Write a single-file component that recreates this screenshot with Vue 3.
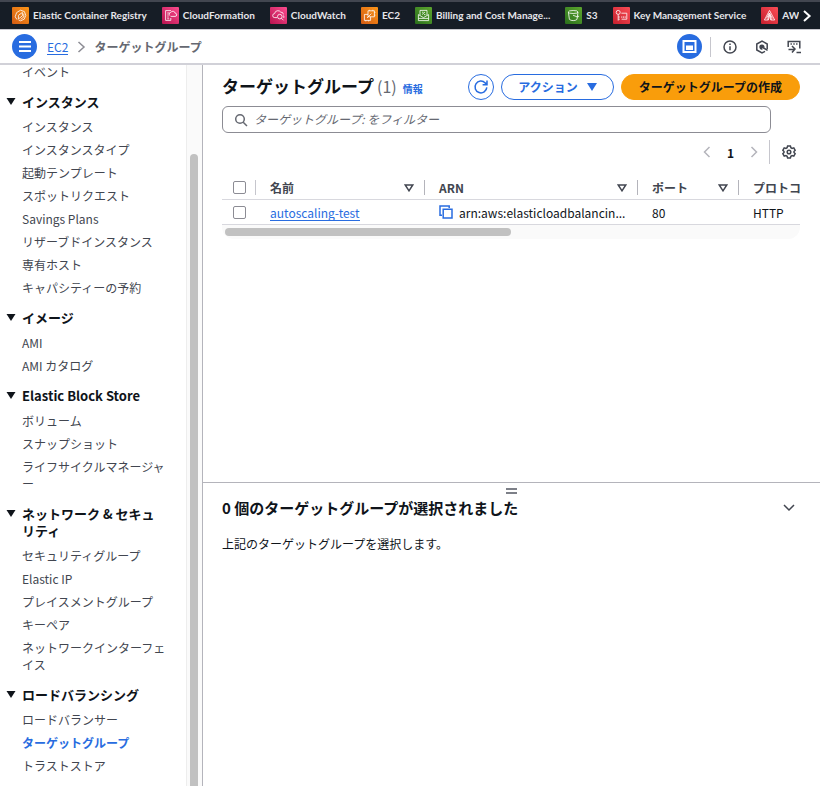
<script setup>
import { ref } from 'vue'

const services = [
  { name: 'Elastic Container Registry', icon: 'ecr', tone: 'orange' },
  { name: 'CloudFormation', icon: 'cfn', tone: 'pink' },
  { name: 'CloudWatch', icon: 'cw', tone: 'pink' },
  { name: 'EC2', icon: 'ec2', tone: 'orange' },
  { name: 'Billing and Cost Manage...', icon: 'bill', tone: 'green' },
  { name: 'S3', icon: 's3', tone: 'green' },
  { name: 'Key Management Service', icon: 'kms', tone: 'red' },
  { name: 'AW', icon: 'iam', tone: 'red' }
]

const sections = [
  {
    title: 'インスタンス',
    items: ['インスタンス', 'インスタンスタイプ', '起動テンプレート', 'スポットリクエスト', 'Savings Plans', 'リザーブドインスタンス', '専有ホスト', 'キャパシティーの予約']
  },
  { title: 'イメージ', items: ['AMI', 'AMI カタログ'] },
  { title: 'Elastic Block Store', items: ['ボリューム', 'スナップショット', 'ライフサイクルマネージャー'] },
  {
    title: 'ネットワーク & セキュリティ',
    items: ['セキュリティグループ', 'Elastic IP', 'プレイスメントグループ', 'キーペア', 'ネットワークインターフェイス']
  },
  { title: 'ロードバランシング', items: ['ロードバランサー', 'ターゲットグループ', 'トラストストア'] }
]

const current = 'ターゲットグループ'
const filter = ref('')
</script>

<template>
  <div class="console" lang="ja">
    <nav class="favorites">
      <ul class="fav-list">
        <li v-for="s in services" :key="s.icon">
          <a href="#" class="fav">
            <svg class="fav-icon" :class="s.tone" viewBox="0 0 17 17" aria-hidden="true">
              <g v-if="s.icon === 'ecr'">
                <path d="M5 12.6 3.2 9.8 4.6 5.6 8.6 3.2l3.8 1.4 1.4 3.8-1.6 3.8-3.6 1.6-2-.8" />
                <path d="M6.4 12V8.4L10.4 5.4v3.4zM8.6 12.4 11.8 10V6.6" />
              </g>
              <g v-else-if="s.icon === 'cfn'">
                <path d="M9 3.6H3.6v9.8h5.2V11M5.2 6h2.6M5.2 8h1.6M5.2 10h1.6M5.2 11.8h2" />
                <path d="M8.6 9.4h4.4a1.6 1.6 0 0 0 .2-3.2 2.4 2.4 0 0 0-4.4-.8 1.9 1.9 0 0 0-1 3.2" />
              </g>
              <g v-else-if="s.icon === 'cw'">
                <path d="M7 10.6H4.8a2 2 0 0 1-.2-4 3.4 3.4 0 0 1 6.2-1.4 2.4 2.4 0 0 1 2.6 2.2" />
                <circle cx="9.8" cy="9.6" r="2.3" />
                <path d="m11.5 11.3 2 2M13 8.4a1.6 1.6 0 0 1 .4 2.6" />
              </g>
              <g v-else-if="s.icon === 'ec2'">
                <path d="M7 3.8h6.4v6H7zM9.6 9.8v3.6H3.4V7.4H7M8.4 3.8V2.8M11.8 3.8V2.8M13.4 5.4h1M13.4 8.2h1M4.8 13.4v1M7.6 13.4v1M6 11l4.4-4.4" />
              </g>
              <g v-else-if="s.icon === 'bill'">
                <path d="M5 8.2V3.4h7v4.8M3.4 7.6 8.5 10.6l5.1-3M3.4 13.6h10.2M3.4 11.4h10.2M3.4 7.6v6M13.6 7.6v6M7 7.6 10 5M7 5.2h1.4M9 7.6h1.4" />
              </g>
              <g v-else-if="s.icon === 's3'">
                <ellipse cx="8.2" cy="5" rx="4.8" ry="1.5" />
                <path d="m3.4 5 1 7.4c1.6 1.6 6 1.6 7.6 0l1-7.4M8 8.2l4 1.6c2 .4 2-.6.8-1.4" />
              </g>
              <g v-else-if="s.icon === 'kms'">
                <circle cx="5.2" cy="5.4" r="2" />
                <path d="M5.2 7.4v6.2M5.2 10h1.6M5.2 12.2h1.6M8.4 6.2h5.4v6H8.6M8.8 9.4v1.4M10.6 9.4v1.4M12.2 9.4v1.4" />
              </g>
              <g v-else>
                <path d="M8.5 3.4 3.4 13h4L8.5 8l1.2 5h4zM5.4 11.4l3-5.4 3 5.4M6.6 12.8 8.5 6l2 6.8" />
              </g>
            </svg>
            <span>{{ s.name }}</span>
          </a>
        </li>
      </ul>
      <button class="fav-next" type="button" aria-label="›">
        <svg width="10" height="14" viewBox="0 0 10 14"><path d="m2 2 5.6 5L2 12" /></svg>
      </button>
    </nav>

    <header class="crumb-bar">
      <button class="round" type="button" aria-label="≡">
        <svg width="25" height="25" viewBox="0 0 25 25"><path d="M7 8h12M7 12.5h12M7 17h12" /></svg>
      </button>
      <a href="#" class="link crumb-link">EC2</a>
      <svg class="crumb-sep" width="9" height="12" viewBox="0 0 9 12"><path d="m1.5 1 5.5 5-5.5 5" /></svg>
      <span class="crumb-here">ターゲットグループ</span>
      <div class="tools">
        <button class="round" type="button" aria-label="□">
          <svg width="25" height="25" viewBox="0 0 25 25">
            <path d="M6.5 7h12v11h-12z" />
            <path class="solid" d="M9 11.500h7V16H9z" />
          </svg>
        </button>
        <span class="tool-rule"></span>
        <button class="tool" type="button" aria-label="i">
          <svg width="16" height="16" viewBox="0 0 16 16"><circle cx="8" cy="8" r="6" /><path d="M8 7.2v4M8 4.6v1.4" /></svg>
        </button>
        <button class="tool" type="button" aria-label="⬡">
          <svg width="16" height="16" viewBox="0 0 16 16"><path d="M11 12.4 8 14l-5.200-3V5L8 2l5.200 3v5" /><path class="solid" d="M8 5.400a2.600 2.600 0 1 0 .6 5.100L8 8l2.400.8A2.600 2.600 0 0 0 8 5.400z" /><path d="m8 8 5.600 3.400" /></svg>
        </button>
        <button class="tool" type="button" aria-label=">_">
          <svg width="16" height="16" viewBox="0 0 16 16"><path d="M2.2 8V2.5h11.6V9.5M4.5 5h1.4M7.3 5h1.4M10.1 5h1.4M2.5 10.5h6M6 7l3 3-3 3.5M10.5 13.5H15" /></svg>
        </button>
      </div>
    </header>

    <div class="body">
      <aside class="sidebar">
        <nav class="side-nav">
          <ul class="side-list lead"><li><a href="#">イベント</a></li></ul>
          <section v-for="sec in sections" :key="sec.title">
            <h2>
              <svg width="10" height="7" viewBox="0 0 10 7"><path d="M.5 0h9L5 7z" /></svg>
              <span>{{ sec.title }}</span>
            </h2>
            <ul class="side-list">
              <li v-for="item in sec.items" :key="item">
                <a href="#" :class="{ active: item === current }">{{ item }}</a>
              </li>
            </ul>
          </section>
        </nav>
        <div class="side-track"><div class="side-thumb"></div></div>
      </aside>

      <main>
        <section class="groups">
          <div class="head">
            <h1>ターゲットグループ</h1>
            <span class="count">(1)</span>
            <a href="#" class="info">情報</a>
            <div class="actions">
              <button class="btn icon" type="button" aria-label="↻">
                <svg width="16" height="16" viewBox="0 0 16 16"><path d="M13.8 8.4A5.9 5.9 0 1 1 12.2 3.9L14 5.6M14 1.5v4.3H9.6" /></svg>
              </button>
              <button class="btn" type="button">
                アクション
                <svg width="10" height="8" viewBox="0 0 10 8"><path class="fill" d="M0 0h10L5 8z" /></svg>
              </button>
              <button class="btn primary" type="button">ターゲットグループの作成</button>
            </div>
          </div>

          <label class="filter">
            <svg width="14" height="14" viewBox="0 0 14 14"><circle cx="6" cy="6" r="4.3" /><path d="m9.2 9.2 3.8 3.8" /></svg>
            <input v-model="filter" type="text" placeholder="ターゲットグループ: をフィルター" />
          </label>

          <div class="pager">
            <button type="button" aria-label="‹"><svg width="8" height="12" viewBox="0 0 8 12"><path d="M6.5 1 1.5 6l5 5" /></svg></button>
            <span class="page">1</span>
            <button type="button" aria-label="›"><svg width="8" height="12" viewBox="0 0 8 12"><path d="m1.5 1 5 5-5 5" /></svg></button>
            <span class="pager-rule"></span>
            <button class="gear" type="button" aria-label="⚙">
              <svg width="14" height="14" viewBox="0 0 14 14">
                <path d="M5.6 1h2.8l.5 1.7 1.2.7 1.7-.5 1.4 2.4L12 6.5v1l1.2 1.2-1.4 2.4-1.7-.5-1.2.7L8.4 13H5.6l-.5-1.7-1.2-.7-1.7.5L.8 8.7 2 7.5v-1L.8 5.3l1.4-2.4 1.7.5 1.2-.7z" />
                <circle cx="7" cy="7" r="1.8" />
              </svg>
            </button>
          </div>

          <div class="table-wrap">
            <table>
              <colgroup><col class="c-check" /><col class="c-name" /><col class="c-arn" /><col class="c-port" /><col class="c-proto" /></colgroup>
              <thead>
                <tr>
                  <th class="check"><input type="checkbox" aria-label="□" /></th>
                  <th v-for="h in ['名前', 'ARN', 'ポート', 'プロトコル']" :key="h">
                    <div class="th">
                      <span>{{ h }}</span>
                      <svg width="10" height="8" viewBox="0 0 10 8"><path d="M1.2 1h7.6L5 6.8z" /></svg>
                    </div>
                  </th>
                </tr>
              </thead>
              <tbody>
                <tr>
                  <td class="check"><input type="checkbox" aria-label="autoscaling-test" /></td>
                  <td><a href="#" class="link">autoscaling-test</a></td>
                  <td>
                    <div class="arn">
                      <button type="button" aria-label="⧉"><svg width="14" height="14" viewBox="0 0 14 14"><path d="M3 10.2H1V1h9.2v2M4.2 4.2H13V13H4.2z" /></svg></button>
                      <span>arn:aws:elasticloadbalancin...</span>
                    </div>
                  </td>
                  <td>80</td>
                  <td>HTTP</td>
                </tr>
              </tbody>
            </table>
            <div class="h-track"><div class="h-thumb"></div></div>
          </div>
        </section>

        <section class="split">
          <div class="grip"><span></span><span></span></div>
          <div class="split-head">
            <h2>0 個のターゲットグループが選択されました</h2>
            <button type="button" aria-label="⌄"><svg width="12" height="8" viewBox="0 0 12 8"><path d="m1 1 5 5 5-5" /></svg></button>
          </div>
          <p>上記のターゲットグループを選択します。</p>
        </section>
      </main>
    </div>
  </div>
</template>

<style>
body {
  background: #fff;
}
</style>

<style scoped>
.console {
  display: flex;
  flex-direction: column;
  height: 100vh;
  overflow: hidden;
  font-family: "Noto Sans CJK JP", "Noto Sans", sans-serif;
  font-size: 12px;
  line-height: 17px;
  color: #0f141a;
}
.console * {
  box-sizing: border-box;
}
ul, h1, h2, p {
  margin: 0;
  padding: 0;
  list-style: none;
}
a {
  color: inherit;
  text-decoration: none;
}
button {
  display: flex;
  align-items: center;
  justify-content: center;
  padding: 0;
  border: 0;
  background: none;
  font: inherit;
  color: inherit;
}
svg {
  display: block;
  flex: none;
  fill: none;
  stroke: currentColor;
  stroke-width: 1.5;
}

.favorites {
  display: flex;
  flex: none;
  align-items: center;
  height: 29px;
  padding: 0 8px 0 12px;
  border-top: 2px solid #424650;
  background: #161d26;
  color: #e6e6ea;
}
.fav-list {
  display: flex;
  flex: 1;
  gap: 15px;
  min-width: 0;
  overflow: hidden;
}
.fav {
  display: flex;
  align-items: center;
  gap: 4px;
  font-family: Lato, "Noto Sans CJK JP", sans-serif;
  font-size: 10px;
  font-weight: 700;
  white-space: nowrap;
}
.fav-icon {
  width: 17px;
  height: 17px;
  border-radius: 1px;
  stroke: #fff;
  stroke-width: 0.8;
}
.orange { background: linear-gradient(45deg, #d45b13, #fb9518); }
.pink { background: linear-gradient(45deg, #b8134f, #fb4b8e); }
.green { background: linear-gradient(45deg, #2a6f1c, #5ca62e); }
.red { background: linear-gradient(45deg, #c5202e, #fb4c55); }
.fav-next {
  flex: none;
  margin-left: 3px;
  color: #fff;
}
.fav-next svg {
  stroke-width: 2;
}

.crumb-bar {
  display: flex;
  flex: none;
  align-items: center;
  height: 36px;
  padding: 0 18px 0 12px;
  border-top: 1px solid #c6c6cd;
  border-bottom: 2px solid #d1d1d8;
}
.round {
  flex: none;
  border-radius: 50%;
  background: #286ce0;
  color: #fff;
}
.round svg {
  stroke-width: 2;
}
.solid {
  fill: currentColor;
  stroke: none;
}
.link {
  border-bottom: 1px solid #286ce0;
  color: #286ce0;
}
.crumb-link {
  margin-left: 10px;
  line-height: 15px;
}
.crumb-sep {
  margin: 0 8px 0 9px;
  color: #8c8c94;
}
.crumb-here {
  font-weight: 700;
  color: #656871;
}
.tools {
  display: flex;
  align-items: center;
  margin-left: auto;
  color: #424650;
}
.tool-rule {
  width: 1px;
  height: 20px;
  margin: 0 11px 0 8px;
  background: #c6c6cd;
}
.tool + .tool {
  margin-left: 16px;
}

.body {
  display: flex;
  flex: 1;
  min-height: 0;
}
.sidebar {
  display: flex;
  flex: none;
  width: 203px;
  overflow: hidden;
  border-right: 1px solid #b4b4bb;
}
.side-nav {
  flex: 1;
  padding: 0 18px 0 6px;
}
.side-list {
  display: flex;
  flex-direction: column;
  gap: 6px;
  margin: 8px 0 13px;
  padding-left: 16px;
  color: #424650;
  word-break: break-all;
  line-break: anywhere;
}
.side-list li {
  min-height: 17px;
}
.side-list a {
  display: block;
}
.side-list.lead {
  margin-top: -2px;
}
.active {
  font-weight: 700;
  color: #286ce0;
}
.side-nav h2 {
  display: flex;
  gap: 6px;
  padding-right: 4px;
  font-size: 13px;
  line-height: 17px;
}
.side-nav h2 svg {
  margin-top: 5px;
  fill: currentColor;
  stroke: none;
}
.side-track {
  flex: none;
  width: 16px;
  padding: 89px 4px 0 3px;
  border-left: 1px solid #ededed;
  background: #fafafa;
}
.side-thumb {
  height: 100%;
  border-radius: 4px 4px 0 0;
  background: #c1c1c1;
}

main {
  display: flex;
  flex: 1;
  flex-direction: column;
  min-width: 0;
}
.groups {
  flex: 1;
  min-height: 0;
  padding: 9px 20px 0 19px;
}
.head {
  display: flex;
  align-items: center;
  height: 26px;
}
h1 {
  font-size: 17px;
  line-height: 24px;
  white-space: nowrap;
}
h1, .count {
  padding-bottom: 2px;
}
.count {
  margin-left: 3px;
  font-size: 16px;
  line-height: 24px;
  color: #656871;
}
.info {
  margin: 3px 0 0 6px;
  font-size: 10px;
  font-weight: 700;
  color: #286ce0;
}
.actions {
  display: flex;
  gap: 7px;
  margin-left: auto;
}
.btn {
  gap: 9px;
  height: 26px;
  padding: 0 16px 1px;
  border: 1px solid #286ce0;
  border-radius: 13px;
  font-weight: 700;
  color: #286ce0;
  white-space: nowrap;
}
.btn.icon {
  width: 26px;
  padding: 0;
}
.btn.primary {
  padding: 0 17px 1px;
  border-color: #f99d0b;
  background: #f99d0b;
  color: #0f141a;
}
.fill {
  fill: currentColor;
  stroke: none;
}
.filter {
  display: flex;
  align-items: center;
  gap: 6px;
  height: 27px;
  margin: 6px 29px 0 0;
  padding: 0 11px;
  border: 1px solid #8c8c94;
  border-radius: 6px;
  color: #656871;
}
.filter input {
  flex: 1;
  min-width: 0;
  padding: 0 0 3px;
  border: 0;
  outline: 0;
  background: none;
  font: inherit;
  color: #0f141a;
}
.filter input::placeholder {
  font-style: italic;
  color: #656871;
  opacity: 1;
}
.pager {
  display: flex;
  align-items: center;
  justify-content: flex-end;
  height: 24px;
  margin-top: 7px;
  padding-right: 4px;
  color: #b4b4bb;
}
.page {
  width: 39px;
  text-align: center;
  font-weight: 700;
  color: #0f141a;
}
.pager-rule {
  width: 1px;
  height: 24px;
  margin: 0 12px 0 11px;
  background: #c6c6cd;
}
.gear {
  color: #424650;
}

.table-wrap {
  margin-top: 12px;
  overflow: hidden;
  border-radius: 0 0 12px 12px;
}
table {
  width: max(100%, 637px);
  table-layout: fixed;
  border-collapse: separate;
  border-spacing: 0;
}
.c-check { width: 34px; }
.c-name { width: 169px; }
.c-arn { width: 213px; }
.c-port { width: 101px; }
th, td {
  height: 24px;
  padding: 0 0 0 14px;
  border-bottom: 1px solid #d8d8de;
  text-align: left;
  white-space: nowrap;
}
td {
  height: 25px;
}
th {
  color: #424650;
}
.th {
  display: flex;
  align-items: center;
  justify-content: space-between;
  height: 15px;
  padding-right: 10px;
  border-right: 1px solid #b4b4bb;
}
.th svg {
  color: #424650;
}
.check {
  padding: 0 0 0 11px;
}
th.check {
  background: linear-gradient(#c6c6cd, #c6c6cd) right center / 1px 15px no-repeat;
}
.check input {
  display: block;
  width: 13px;
  height: 13px;
  margin: 0;
  appearance: none;
  border: 1px solid #8c8c94;
  border-radius: 2px;
  background: #fff;
}
td .link {
  display: inline-block;
  line-height: 15px;
}
.arn {
  display: flex;
  align-items: center;
  gap: 6px;
}
.arn button {
  color: #286ce0;
}
.h-track {
  height: 14px;
  padding: 3px;
  background: #fafafa;
}
.h-thumb {
  width: 50%;
  height: 8px;
  border-radius: 4px;
  background: #c1c1c1;
}

.split {
  flex: 0 0 304px;
  padding: 5px 20px 0 19px;
  border-top: 1px solid #b4b4bb;
}
.grip {
  display: flex;
  flex-direction: column;
  align-items: center;
  gap: 2px;
}
.grip span {
  width: 11px;
  height: 2px;
  background: #7d8088;
}
.split-head {
  display: flex;
  align-items: center;
  justify-content: space-between;
  margin-top: 3px;
  padding-right: 5px;
}
.split-head h2 {
  font-size: 15px;
  line-height: 22px;
}
.split-head button {
  color: #424650;
}
.split p {
  margin-top: 16px;
}
</style>
